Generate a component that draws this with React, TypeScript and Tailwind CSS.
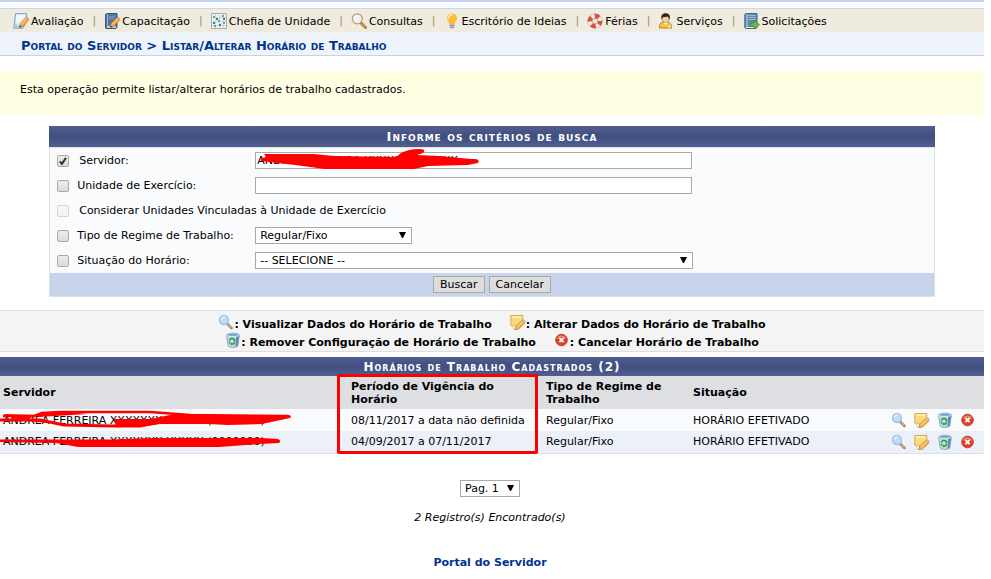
import { useState } from 'react';
import type { ReactNode } from 'react';

type IconProps = { className?: string };

const HEADER_BAR = 'bg-linear-to-b from-[#51608f] via-[#404e80] to-[#51608f] text-center font-bold text-white [font-variant:small-caps]';

function PencilShape() {
    return (
        <>
            <path d="M7 10.8 13 4.6l2.6 2.4-6 6.4-3.4 1.2z" fill="#f7ab3a" stroke="#b9752a" strokeWidth=".7" />
            <path d="m8 11.3 6-6.2" stroke="#ffe09a" strokeWidth="1" />
            <path d="m13 4.6 1-.9 2 2-.5 1.3z" fill="#e98263" />
            <path d="m6.2 14.6.7-2.4 1.8 1.7z" fill="#5d4a3a" />
        </>
    );
}

function EvaluationIcon() {
    return (
        <svg viewBox="0 0 16 16" width="16" height="16" fill="none">
            <path d="M2.5.7h11l-.7 9.5-3 5H.8z" fill="#e6f1fb" stroke="#6d9ccc" />
            <path d="M3.5 3h8M3.2 5h7M3 7h5" stroke="#fff" />
            <path d="M1 15.2 2 10l6 5.2z" fill="#a9cbea" />
            <PencilShape />
        </svg>
    );
}

function TrainingIcon() {
    return (
        <svg viewBox="0 0 16 16" width="16" height="16" fill="none">
            <path d="M1.5 1.5 3 .5h10v13l-1 2H2l-.5-1z" fill="#54759f" stroke="#34557f" />
            <path d="M3.5 1v13" stroke="#9db8d5" />
            <path d="M3 14h9" stroke="#e8eef5" strokeWidth="1.5" />
            <path d="M5 3.5h6M5 5.5h5" stroke="#7897bd" />
            <PencilShape />
        </svg>
    );
}

function ChartIcon() {
    return (
        <svg viewBox="0 0 16 16" width="16" height="16" fill="none">
            <path d="M.5.5h15v15H.5z" fill="#edf3f3" stroke="#a4adb8" />
            <path d="M4.5 1v14M8.5 1v14M12.5 1v14M1 4.5h14M1 8.5h14M1 12.5h14" stroke="#c9d8dc" />
            <path d="M2 3h2v2H2zm5 4h2v2H7zm4-5h2v2h-2zm1 7h2v2h-2zM3 12h2v2H3z" fill="#67b84c" />
            <path d="M5 5h2v2H5zm-3 4h2v2H2zm10-4h2v2h-2zM8 11h2v2H8z" fill="#3c73b8" />
        </svg>
    );
}

function LensIcon() {
    return (
        <svg viewBox="0 0 16 16" width="16" height="16" fill="none">
            <path d="m10 10 4.5 4.5" stroke="#a97832" strokeWidth="2.8" strokeLinecap="round" />
            <path d="m10.5 10.3 3.7 3.7" stroke="#efbd6a" strokeWidth="1" />
            <circle cx="6.3" cy="5.8" r="5" fill="#eff3f6" stroke="#c5966f" strokeWidth="1.2" />
            <path d="M3.5 5a3 3 0 0 1 3-2.3" stroke="#fff" strokeWidth="1.5" />
        </svg>
    );
}

function BulbIcon() {
    return (
        <svg viewBox="0 0 16 16" width="16" height="16" fill="none">
            <path d="M3 5.4a5 5 0 0 1 10 0c0 2.4-2 3.4-2.5 5.6h-5C5 8.8 3 7.8 3 5.4z" fill="#fdbc35" />
            <path d="M4.5 5A3.3 3.3 0 0 1 8 2" stroke="#ffebaa" strokeWidth="1.6" strokeLinecap="round" />
            <path d="M5.5 11h5v3L9 15.5H7L5.5 14z" fill="#b7bdc6" />
            <path d="M5.5 12.5h5M6 14.5h4" stroke="#838b97" strokeWidth=".7" />
        </svg>
    );
}

function BuoyIcon() {
    return (
        <svg viewBox="0 0 16 16" width="16" height="16" fill="none">
            <circle cx="8" cy="8" r="5.1" stroke="#c0a8a2" strokeWidth="5" />
            <circle cx="8" cy="8" r="5.1" stroke="#f3f1f0" strokeWidth="4" />
            <circle cx="8" cy="8" r="5.1" stroke="#dd513b" strokeWidth="4.6" strokeDasharray="4.6 3.41" strokeDashoffset="1" />
            <circle cx="8" cy="8" r="2.6" fill="#efebde" stroke="#b98d82" strokeWidth=".5" />
        </svg>
    );
}

function PersonIcon() {
    return (
        <svg viewBox="0 0 16 16" width="16" height="16" fill="none">
            <path d="M1.5 15c-.5-3 1-5.5 3.5-6h4.500c3 .5 4.500 3 4 6z" fill="#f4c734" stroke="#97742a" strokeWidth=".8" />
            <path d="m5.500 9 2 3 2.500-3z" fill="#fff" />
            <path d="M9 14.500 13 11.500v3z" fill="#fff0a8" />
            <ellipse cx="7.5" cy="5.5" rx="3.5" ry="4" fill="#f5cfa9" stroke="#8a5b36" strokeWidth=".5" />
            <path d="M3.500 6.500C2.300 2 5 .2 7.800.2c3.200 0 4.900 2.300 3.900 6.300C10.500 5 10.500 4 9.500 3.500 7.500 4.500 5 3.800 4.600 4.500z" fill="#3d2418" />
        </svg>
    );
}

function RequestIcon() {
    return (
        <svg viewBox="0 0 16 16" width="16" height="16" fill="none">
            <path d="M.8 1.5 2 .5h11v14l-1 1H2l-1.200-1z" fill="#6389b3" stroke="#426892" />
            <path d="M3 1v13.500" stroke="#c3d5e6" />
            <path d="M4.500 2.500h7M4.500 4.500h7M4.500 6.500h7" stroke="#9db9d4" />
            <path d="M2 14.500h10" stroke="#e9f0f6" />
            <path d="M6 10h4V7.300l5.500 4.400L10 16v-2.700H6z" fill="#6bb84a" stroke="#3e8431" strokeWidth=".7" />
        </svg>
    );
}

function ViewIcon() {
    return (
        <svg viewBox="0 0 16 16" width="16" height="16" fill="none">
            <path d="m9.500 10 4 4" stroke="#9a8b7c" strokeWidth="2.6" strokeLinecap="round" />
            <path d="m10.300 10.300 3 3" stroke="#e7b783" strokeWidth="1.2" />
            <circle cx="6" cy="6" r="4.5" fill="#bedcf8" stroke="#a0c0e8" strokeWidth="1.3" />
            <path d="M3.500 5.500A3 3 0 0 1 7 3.300" stroke="#e6f4ff" strokeWidth="1.5" />
        </svg>
    );
}

function NoteIcon() {
    return (
        <svg viewBox="0 0 16 16" width="16" height="16" fill="none">
            <path d="M.8 1.500h12v8l-4 4-8-2.500z" fill="#fbdc7c" stroke="#d8ab4c" />
            <path d="M2 3h9.500" stroke="#fff0b6" strokeWidth="1.5" />
            <path d="m1 10.500 3 1.500 2-1v4l-2 .5z" fill="#fff" stroke="#d9a86e" strokeWidth=".7" />
            <path d="m5.500 12.500 6.500-6 3 2.500-6.500 6-3.500 1z" fill="#f4b445" stroke="#b87b31" strokeWidth=".7" />
            <path d="m6.800 13 6-5.500" stroke="#ffe79c" />
            <path d="m12 6.500 1.500-1.300 2.300 2-.8 1.800z" fill="#b9b9b5" />
        </svg>
    );
}

function BinIcon() {
    return (
        <svg viewBox="0 0 16 16" width="16" height="16" fill="none">
            <path d="m1.500 2.500 1.800 11.800c2 1.500 7 1.500 9.400 0l1.800-11.800z" fill="#c1daee" stroke="#7899ba" strokeWidth=".8" />
            <path d="m11 4.500-.5 10.300 2.200-.7L14.300 3z" fill="#668bb1" />
            <ellipse cx="8" cy="2.6" rx="6.7" ry="2" fill="#83a8cd" stroke="#e2edf6" strokeWidth=".9" />
            <path d="M4.300 8.500 5.800 6.500h2.500l1 1.500m.3 1.500-1 2.500H6.500m-1.500-.5-.8-1.700" stroke="#23a52c" strokeWidth="1.5" />
            <path d="m8 8.800 2.300.3V7zM7 10.500v3l-2-1.500z" fill="#23a52c" />
        </svg>
    );
}

function CancelIcon() {
    return (
        <svg viewBox="0 0 16 16" width="16" height="16" fill="none">
            <circle cx="7.5" cy="8" r="5.8" fill="#df4028" stroke="#b83a25" strokeWidth=".9" />
            <path d="M3.500 6.500a4.500 4.500 0 0 1 8 0" stroke="#f39a7b" strokeWidth="1.2" />
            <path d="m5.400 5.900 4.200 4.200m0-4.200-4.200 4.200" stroke="#fff" strokeWidth="1.9" />
        </svg>
    );
}

function Checkbox({ id, ...props }: { id: string; defaultChecked?: boolean; disabled?: boolean }) {
    return (
        <span className="grid size-[12px] shrink-0">
            <input
                id={id}
                type="checkbox"
                className="peer col-start-1 row-start-1 size-[12px] appearance-none rounded-[2px] border border-[#a9a9a9] bg-linear-to-b from-[#ececec] to-[#dcdcdc] disabled:border-[#d5d5d5] disabled:from-[#f7f7f7] disabled:to-[#f2f2f2]"
                {...props}
            />
            <svg viewBox="0 0 12 12" className="pointer-events-none invisible col-start-1 row-start-1 size-[12px] peer-checked:visible" fill="none">
                <path d="m2.800 6.300 2.200 2.500 4-6" stroke="#333" strokeWidth="2" />
            </svg>
        </span>
    );
}

function Select({ id, label, options, className = '' }: { id: string; label?: string; options: string[]; className?: string }) {
    return (
        <span className={`grid ${className}`}>
            <select
                id={id}
                aria-label={label}
                className="col-start-1 row-start-1 h-[17px] w-full appearance-none border border-[#a9a9a9] bg-white pl-1 text-black"
            >
                {options.map((option) => (
                    <option key={option}>{option}</option>
                ))}
            </select>
            <svg viewBox="0 0 7 6" className="pointer-events-none col-start-1 row-start-1 mt-[5px] mr-[6px] h-[6px] w-[7px] justify-self-end">
                <path d="M0 0h7L4 6H3z" />
            </svg>
        </span>
    );
}

function Field({ id, label, gap = 'ml-2', checked, disabled, children }: { id: string; label: string; gap?: string; checked?: boolean; disabled?: boolean; children?: ReactNode }) {
    return (
        <div className="flex h-[25px] items-center pl-[7px]">
            <Checkbox id={`${id}-check`} defaultChecked={checked} disabled={disabled} />
            <label htmlFor={children ? id : `${id}-check`} className={`${gap} ${children ? 'w-[178px]' : ''}`}>
                {label}
            </label>
            {children}
        </div>
    );
}

const menu = [
    { label: 'Avaliação', Icon: EvaluationIcon },
    { label: 'Capacitação', Icon: TrainingIcon },
    { label: 'Chefia de Unidade', Icon: ChartIcon },
    { label: 'Consultas', Icon: LensIcon },
    { label: 'Escritório de Ideias', Icon: BulbIcon },
    { label: 'Férias', Icon: BuoyIcon },
    { label: 'Serviços', Icon: PersonIcon },
    { label: 'Solicitações', Icon: RequestIcon },
];

const legend = [
    [
        { label: 'Visualizar Dados do Horário de Trabalho', Icon: ViewIcon },
        { label: 'Alterar Dados do Horário de Trabalho', Icon: NoteIcon },
    ],
    [
        { label: 'Remover Configuração de Horário de Trabalho', Icon: BinIcon },
        { label: 'Cancelar Horário de Trabalho', Icon: CancelIcon },
    ],
];

const schedules = [
    { id: 1, server: 'ANDREA FERREIRA XXXXXXX XXXXX (0000000)', period: '08/11/2017 a data não definida', type: 'Regular/Fixo', status: 'HORÁRIO EFETIVADO' },
    { id: 2, server: 'ANDREA FERREIRA XXXXXXX XXXXX (0000000)', period: '04/09/2017 a 07/11/2017', type: 'Regular/Fixo', status: 'HORÁRIO EFETIVADO' },
];

const actions = [
    { label: 'Visualizar', Icon: ViewIcon },
    { label: 'Alterar', Icon: NoteIcon },
    { label: 'Remover', Icon: BinIcon },
    { label: 'Cancelar', Icon: CancelIcon },
];

// Red marker strokes over the personal data
function FirstRowMarker({ className }: IconProps) {
    return (
        <svg viewBox="0 0 292 22" width="292" height="22" fill="none" className={className}>
            <path d="M4 7h30l8-3 18-1h90l40 3 98 1" stroke="#f00" strokeWidth="2.5" strokeLinecap="round" strokeLinejoin="round" />
            <path d="M0 11h40l24 5 50 1h26l20-4h80" stroke="#f00" strokeWidth="3" strokeLinejoin="round" />
            <path d="M3 5 36 6l-8 4 21 3-2 1-28-3zM38 5l30-2 20 2-50 3zM114 10h36l20-4h116q7 0 4 3l-14 3-14 3-34 1-20-1h-48l-20 3h-24z" fill="#f00" />
        </svg>
    );
}

function SecondRowMarker({ className }: IconProps) {
    return (
        <svg viewBox="0 0 292 22" width="292" height="22" fill="none" className={className}>
            <path d="M0 8.500h112l40-1.500h110l16 1q4 2 1 4l-20 1-26 2-14 1H78l-22-4-56-1z" fill="#f00" />
        </svg>
    );
}

export default function App() {
    const [server, setServer] = useState('ANDREA FERREIRA XXXXXXX XXXXX');

    return (
        <div className="bg-white pr-[7px] font-['DejaVu_Sans',sans-serif] text-[11px] leading-[13px] text-black">
            <header className="border-t-2 border-[#c4d2eb] bg-[#fafbff] pt-[6px]">
                <nav className="flex h-6 items-center border-t border-[#c8d8ec] bg-[#efebde] pl-[13px]">
                    {menu.map(({ label, Icon }, i) => (
                        <div key={label} className="flex items-center leading-[15px]">
                            {i > 0 && <span className="mr-2 ml-[9px] text-[#a08c5c]">|</span>}
                            <a href="#" className="flex items-center gap-[2px] whitespace-nowrap">
                                <Icon />
                                <span className="pt-px">{label}</span>
                            </a>
                        </div>
                    ))}
                </nav>
                <h1 className="h-6 border-b border-[#c4d2eb] bg-[#eff3fa] pl-[21px] text-[13px] leading-[27px] font-bold text-[#003390] [font-variant:small-caps]">
                    Portal do Servidor &gt; Listar/Alterar Horário de Trabalho
                </h1>
            </header>

            <p className="mt-[15px] bg-[#ffffe4] px-5 pt-3 pb-[19px]">Esta operação permite listar/alterar horários de trabalho cadastrados.</p>

            <form className="mx-auto mt-[11px] w-[90%]" onSubmit={(e) => e.preventDefault()}>
                <h2 className={`${HEADER_BAR} h-[21px] text-[13px] leading-[21px] tracking-[1px]`}>Informe os critérios de busca</h2>
                <div className="border border-[#dedfe3] bg-[#fafbfd]">
                    <Field id="server" label="Servidor:" gap="ml-[10px] mr-[-2px]" checked>
                        <span className="relative">
                            <input
                                id="server"
                                type="text"
                                value={server}
                                onChange={(e) => setServer(e.target.value)}
                                className="block h-[17px] w-[437px] border border-[#a9a9a9] bg-white px-px"
                            />
                            <svg viewBox="0 0 226 20" width="226" height="20" className="pointer-events-none absolute -top-[3px] left-0">
                                <path d="M9 5h50l20 2 62 1 5-4q8-4 18-4 8 0 4 4l-6 2 22 1 32 3h5q4 1 2 4l-10 2-40 1-14 3H70L40 16 6 12q-2-3 5-4z" fill="#f00" />
                            </svg>
                        </span>
                    </Field>
                    <Field id="unit" label="Unidade de Exercício:">
                        <input id="unit" type="text" className="h-[17px] w-[437px] border border-[#a9a9a9] bg-white px-px" />
                    </Field>
                    <Field id="linked" label="Considerar Unidades Vinculadas à Unidade de Exercício" gap="ml-[10px]" disabled />
                    <Field id="regime" label="Tipo de Regime de Trabalho:">
                        <Select id="regime" options={['Regular/Fixo']} className="w-[157px]" />
                    </Field>
                    <Field id="status" label="Situação do Horário:">
                        <Select id="status" options={['-- SELECIONE --']} className="w-[438px]" />
                    </Field>
                    <div className="flex h-[23px] items-center justify-center gap-1 bg-[#c8d4ec]">
                        <button type="submit" className="h-[17px] border border-[#a9a9a9] bg-[#ddd] px-[6px]">Buscar</button>
                        <button type="button" className="h-[17px] border border-[#a9a9a9] bg-[#ddd] px-[6px]">Cancelar</button>
                    </div>
                </div>
            </form>

            <div className="mt-[13px] border-y border-[#dedede] bg-[#f4f4f4] pt-[3px] pb-px font-bold">
                {legend.map((line, i) => (
                    <div key={i} className="flex h-[18px] items-start justify-center gap-[18px]">
                        {line.map(({ label, Icon }) => (
                            <span key={label} className="flex items-start leading-[22px]">
                                <Icon />: {label}
                            </span>
                        ))}
                    </div>
                ))}
            </div>

            <table className="mt-[5px] w-full table-fixed border-b border-[#dedfe3] text-left">
                <caption className={`${HEADER_BAR} h-[19px] text-[12px] leading-[20px] tracking-[1px]`}>Horários de Trabalho Cadastrados (2)</caption>
                <colgroup>
                    <col />
                    <col className="w-[195px]" />
                    <col className="w-[147px]" />
                    <col className="w-[201px]" />
                    <col className="w-[93px]" />
                </colgroup>
                <thead className="bg-[#dedfe3]">
                    <tr className="h-[33px]">
                        <th className="px-[3px]">Servidor</th>
                        <th className="relative px-[3px]">
                            Período de Vigência do Horário
                            <span className="pointer-events-none absolute -top-[2px] -left-[11px] h-[80px] w-[201px] rounded-[2px] border-3 border-[#f00]" />
                        </th>
                        <th className="px-[3px]">Tipo de Regime de Trabalho</th>
                        <th className="px-[3px]">Situação</th>
                        <th aria-label="Ações" />
                    </tr>
                </thead>
                <tbody>
                    {schedules.map((item, i) => (
                        <tr key={item.id} className="h-[22px] odd:bg-[#fafbfd] even:bg-[#ecf0f8]">
                            <td className="relative px-[3px]">
                                {item.server}
                                {i === 0 ? <FirstRowMarker className="absolute top-0 left-0" /> : <SecondRowMarker className="absolute top-0 left-0" />}
                            </td>
                            <td className="px-[3px] whitespace-nowrap">{item.period}</td>
                            <td className="px-[3px]">{item.type}</td>
                            <td className="px-[3px]">{item.status}</td>
                            <td>
                                <div className="flex gap-[7px]">
                                    {actions.map(({ label, Icon }) => (
                                        <button key={label} type="button" title={label}>
                                            <Icon />
                                        </button>
                                    ))}
                                </div>
                            </td>
                        </tr>
                    ))}
                </tbody>
            </table>

            <div className="mt-[26px] flex flex-col items-center pr-1 pb-[10px]">
                <Select id="page" label="Página" options={['Pag. 1']} className="w-[60px]" />
                <p className="mt-[14px] italic">2 Registro(s) Encontrado(s)</p>
                <a href="#" className="mt-8 font-bold text-[#003390]">
                    Portal do Servidor
                </a>
            </div>
        </div>
    );
}
